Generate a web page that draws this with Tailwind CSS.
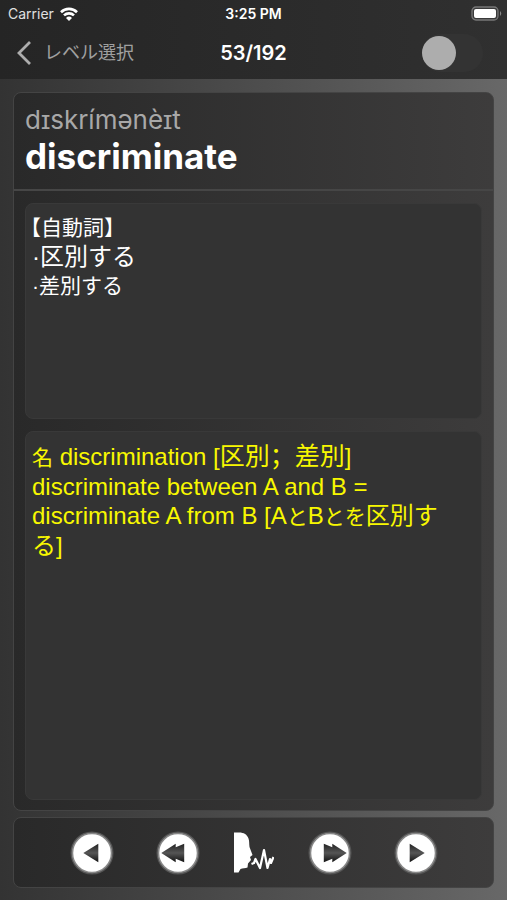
<!DOCTYPE html>
<html lang="ja">
  <head>
    <meta charset="UTF-8" />
    <meta name="viewport" content="width=device-width, initial-scale=1.0" />
    <title>discriminate</title>
    <script src="https://cdn.jsdelivr.net/npm/@tailwindcss/browser@4"></script>
  </head>
  <body
    class="min-h-screen flex flex-col bg-linear-to-r from-[#333333] to-[#686868] text-white font-['Inter','Noto_Sans_CJK_JP',sans-serif]"
  >
    <!-- Header -->
    <header class="bg-linear-to-r from-[#252525] to-[#303030]">
      <div class="grid grid-cols-3 items-center h-7 px-2 text-sm">
        <div class="flex items-center gap-1.5 text-[#e0e0e0]">
          <span>Carrier</span>
          <svg class="w-[18px] h-[14px]" viewBox="0 0 18 14" fill="none" stroke="#fff" stroke-width="2.6">
            <path d="M1 5.2a11.4 11.4 0 0 1 16 0" />
            <path d="M4 8.4a7.2 7.2 0 0 1 10 0" />
            <path d="M9 14 6 10.9a4.3 4.3 0 0 1 6 0z" fill="#fff" stroke="none" />
          </svg>
        </div>
        <span class="text-center font-semibold">3:25 PM</span>
        <svg class="justify-self-end -mr-1 w-8 h-4" viewBox="0 0 32 16">
          <rect x="1" y="1" width="26" height="13" rx="4" fill="#3a3a3a" stroke="#777" stroke-width="1.3" />
          <rect x="3" y="3" width="22" height="9" rx="2" fill="#fff" />
          <path d="M29 5q2.500 2.500 0 5z" fill="#888" />
        </svg>
      </div>
      <nav class="grid grid-cols-3 items-center h-[51px] pb-0.5 px-4">
        <a href="#" class="flex items-center gap-3 text-lg leading-6 whitespace-nowrap text-[#a0a0a0]">
          <svg class="w-4 h-6" viewBox="0 0 16 24" fill="none" stroke="#adadad" stroke-width="2.800">
            <path d="M14 1 3 12l11 11" />
          </svg>
          レベル選択
        </a>
        <h1 class="text-center text-xl leading-6 font-semibold">53/192</h1>
        <input
          type="checkbox"
          aria-label="Auto play"
          class="justify-self-end mr-2 appearance-none w-[61px] h-[38px] rounded-full bg-[#333333] flex items-center before:block before:size-[34px] before:rounded-full before:bg-[#adadad] checked:before:ml-auto"
        />
      </nav>
    </header>

    <!-- Word card -->
    <main
      class="flex-1 flex flex-col mt-[13px] mx-[13px] border border-[#444444] rounded-lg bg-linear-to-r from-[#292929] to-[#3d3c3c]"
    >
      <div class="h-[98px] px-[11px] pt-[11px] border-b-2 border-[#464646]">
        <p class="text-[26px] leading-8 text-[#a8a8a8]">dɪskrímənèɪt</p>
        <h2 class="text-[35px] leading-10 font-bold">discriminate</h2>
      </div>
      <div
        class="flex-1 flex flex-col gap-3 px-[11px] pt-3 pb-[10px] font-['Liberation_Sans','Noto_Sans_CJK_JP',sans-serif] text-2xl leading-[29px]"
      >
        <section class="min-h-[216px] px-1.5 pt-[9px] rounded-lg bg-[#333333] border border-[#393939]">
          <p class="-ml-3 text-[21px]">【自動詞】</p>
          <p>·区別する</p>
          <p class="text-[21px]">·差別する</p>
        </section>
        <section class="flex-1 pl-1.5 pr-6 pt-2 rounded-lg bg-[#333333] border border-[#393939] text-[#f8f800]">
          <p>
            <span class="text-[21px]">名</span> discrimination [<span class="text-[25px]">区別<span lang="zh-CN" class="font-['Noto_Sans_CJK_SC',sans-serif]">；</span>差別</span>]
          </p>
          <p>discriminate between A and B =</p>
          <p>
            discriminate A from B [A<span class="text-[21px]">と</span>B<span class="text-[21px]">とを</span>区別する]
          </p>
        </section>
      </div>
    </main>

    <!-- Playback controls -->
    <footer
      class="flex justify-center gap-[42px] items-center h-[71px] mt-[6px] mb-3 mx-[13px] border border-[#444444] rounded-lg bg-linear-to-r from-[#292929] to-[#3d3c3c]"
    >
      <button aria-label="Previous">
        <svg class="size-11" viewBox="0 0 44 44">
          <defs>
            <linearGradient id="arrow" x1="0" y1="0" x2="0" y2="1">
              <stop offset="0" stop-color="#222" />
              <stop offset=".5" stop-color="#555" />
              <stop offset="1" stop-color="#111" />
            </linearGradient>
          </defs>
          <circle cx="22" cy="22" r="20.500" fill="#fff" stroke="#555" stroke-width="2" />
          <circle cx="22" cy="22" r="19.500" fill="#fff" stroke="#888" stroke-width="1.500" />
          <path d="M13.300 22 28.300 12.700v18.600z" fill="url(#arrow)" />
        </svg>
      </button>
      <button aria-label="Rewind">
        <svg class="size-11" viewBox="0 0 44 44">
          <circle cx="22" cy="22" r="20.500" fill="#fff" stroke="#555" stroke-width="2" />
          <circle cx="22" cy="22" r="19.500" fill="#fff" stroke="#888" stroke-width="1.500" />
          <path d="M5.300 22 19.700 12.700v3.500l8.500-3.500v18.600l-8.500-3.500v3.500z" fill="url(#arrow)" />
        </svg>
      </button>
      <button aria-label="Speak" class="-mx-2">
        <svg class="w-10 h-11" viewBox="0 0 40 44" fill="#fff">
          <path d="M0 1.500h5c5 0 8 2 9.500 6 1 2.500 .5 5 1 8.500l3 8-2.500 2 1 3-3 3.500-.5 4c-2 1-5 .5-7 1.500L4.500 41.500H0z" />
          <path d="m17.500 33 2.500-1 1.500-4 4.500 9 4-18 3.500 18 2.500-9 1 4 2.500-6" fill="none" stroke="#fff" stroke-width="2.200" stroke-linejoin="round" />
        </svg>
      </button>
      <button aria-label="Fast forward">
        <svg class="size-11" viewBox="0 0 44 44">
          <circle cx="22" cy="22" r="20.500" fill="#fff" stroke="#555" stroke-width="2" />
          <circle cx="22" cy="22" r="19.500" fill="#fff" stroke="#888" stroke-width="1.500" />
          <path d="M38.700 22 24.300 12.700v3.500l-8.500-3.500v18.600l8.500-3.500v3.500z" fill="url(#arrow)" />
        </svg>
      </button>
      <button aria-label="Next">
        <svg class="size-11" viewBox="0 0 44 44">
          <circle cx="22" cy="22" r="20.500" fill="#fff" stroke="#555" stroke-width="2" />
          <circle cx="22" cy="22" r="19.500" fill="#fff" stroke="#888" stroke-width="1.500" />
          <path d="M30.700 22 15.700 12.700v18.600z" fill="url(#arrow)" />
        </svg>
      </button>
    </footer>
  </body>
</html>
